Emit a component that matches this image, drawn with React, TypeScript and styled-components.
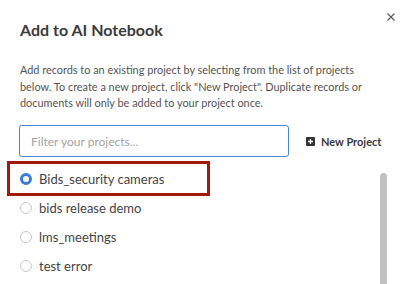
import React from "react";
import styled, { createGlobalStyle } from "styled-components";

const GlobalStyle = createGlobalStyle`
  html, body {
    margin: 0;
    padding: 0;
    background: #ffffff;
  }
  body {
    font-family: Lato, "Open Sans", sans-serif;
    overflow: hidden;
  }
`;

const Dialog = styled.div`
  width: 410px;
  height: 284px;
  box-sizing: border-box;
  padding: 0 20px;
  display: flex;
  flex-direction: column;
  overflow: hidden;
`;

const Header = styled.div`
  display: flex;
  justify-content: space-between;
  align-items: flex-start;
  margin-right: -6px;
`;

const Title = styled.h2`
  margin: 18px 0 0;
  font-size: 16px;
  line-height: 24px;
  font-weight: 700;
  color: #3b3b3b;
`;

const CloseButton = styled.button`
  margin-top: 12px;
  width: 10px;
  height: 10px;
  padding: 0;
  border: none;
  background: none;
  display: flex;
  cursor: pointer;
`;

const Description = styled.p`
  margin: 20px 0 0;
  max-width: 356px;
  font-size: 10.9px;
  line-height: 16.7px;
  color: #555555;
`;

const FilterRow = styled.div`
  display: flex;
  align-items: center;
  margin-top: 13px;
  gap: 17px;
`;

const FilterInput = styled.input`
  width: 270px;
  height: 32px;
  box-sizing: border-box;
  margin-left: -1px;
  padding: 0 11px;
  border: 1px solid #4d87d6;
  border-radius: 3px;
  font-family: Lato, sans-serif;
  font-size: 12px;
  color: #333;
  outline: none;
  &::placeholder {
    color: #a3a3a3;
  }
`;

const NewProjectButton = styled.button`
  display: flex;
  align-items: center;
  gap: 6px;
  padding: 0;
  border: none;
  background: none;
  font-family: Lato, sans-serif;
  font-size: 11px;
  font-weight: 700;
  color: #3a3a3a;
  cursor: pointer;
`;

const PlusBox = styled.span`
  width: 9px;
  height: 9px;
  border-radius: 1px;
  background: #333;
  display: flex;
  align-items: center;
  justify-content: center;
`;

const ListArea = styled.div`
  display: flex;
  margin-top: 7px;
  margin-left: -10px;
  margin-right: 3px;
  flex: 1;
  min-height: 0;
`;

const ProjectList = styled.ul`
  list-style: none;
  margin: 0;
  padding: 0;
  flex: 1;
`;

const ProjectRow = styled.li<{ $selected?: boolean }>`
  width: 197px;
  height: 29px;
  box-sizing: border-box;
  padding-left: 10px;
  display: flex;
  align-items: center;
  gap: 7px;
  font-size: 13px;
  color: #444;
  outline: ${(p) => (p.$selected ? "3px solid #a3190b" : "none")};
`;

const Radio = styled.span<{ $checked?: boolean }>`
  width: 12px;
  height: 12px;
  box-sizing: border-box;
  border-radius: 50%;
  flex-shrink: 0;
  border: ${(p) => (p.$checked ? "3.5px solid #3b7bd6" : "1px solid #c9c9c9")};
  background: #fff;
`;

const Scrollbar = styled.div`
  width: 7px;
  height: 130px;
  margin-top: 9px;
  border-radius: 4px 4px 0 0;
  background: #c1c1c1;
`;

const projects = [
  { name: "Bids_security cameras", selected: true },
  { name: "bids release demo" },
  { name: "lms_meetings" },
  { name: "test error" },
];

export default function App() {
  return (
    <Dialog>
      <GlobalStyle />
      <Header>
        <Title>Add to AI Notebook</Title>
        <CloseButton aria-label="Close">
          <svg width="10" height="10" viewBox="0 0 10 10">
            <path d="M1.5 1.5L8.5 8.5M8.5 1.5L1.5 8.5" stroke="#555" strokeWidth="1.1" />
          </svg>
        </CloseButton>
      </Header>
      <Description>
        Add records to an existing project by selecting from the list of projects
        below. To create a new project, click "New Project". Duplicate records or
        documents will only be added to your project once.
      </Description>
      <FilterRow>
        <FilterInput placeholder="Filter your projects..." />
        <NewProjectButton>
          <PlusBox>
            <svg width="7" height="7" viewBox="0 0 7 7">
              <path d="M3.5 1V6M1 3.5H6" stroke="#fff" strokeWidth="1.3" />
            </svg>
          </PlusBox>
          New Project
        </NewProjectButton>
      </FilterRow>
      <ListArea>
        <ProjectList>
          {projects.map((p) => (
            <ProjectRow key={p.name} $selected={p.selected}>
              <Radio $checked={p.selected} />
              {p.name}
            </ProjectRow>
          ))}
        </ProjectList>
        <Scrollbar />
      </ListArea>
    </Dialog>
  );
}
